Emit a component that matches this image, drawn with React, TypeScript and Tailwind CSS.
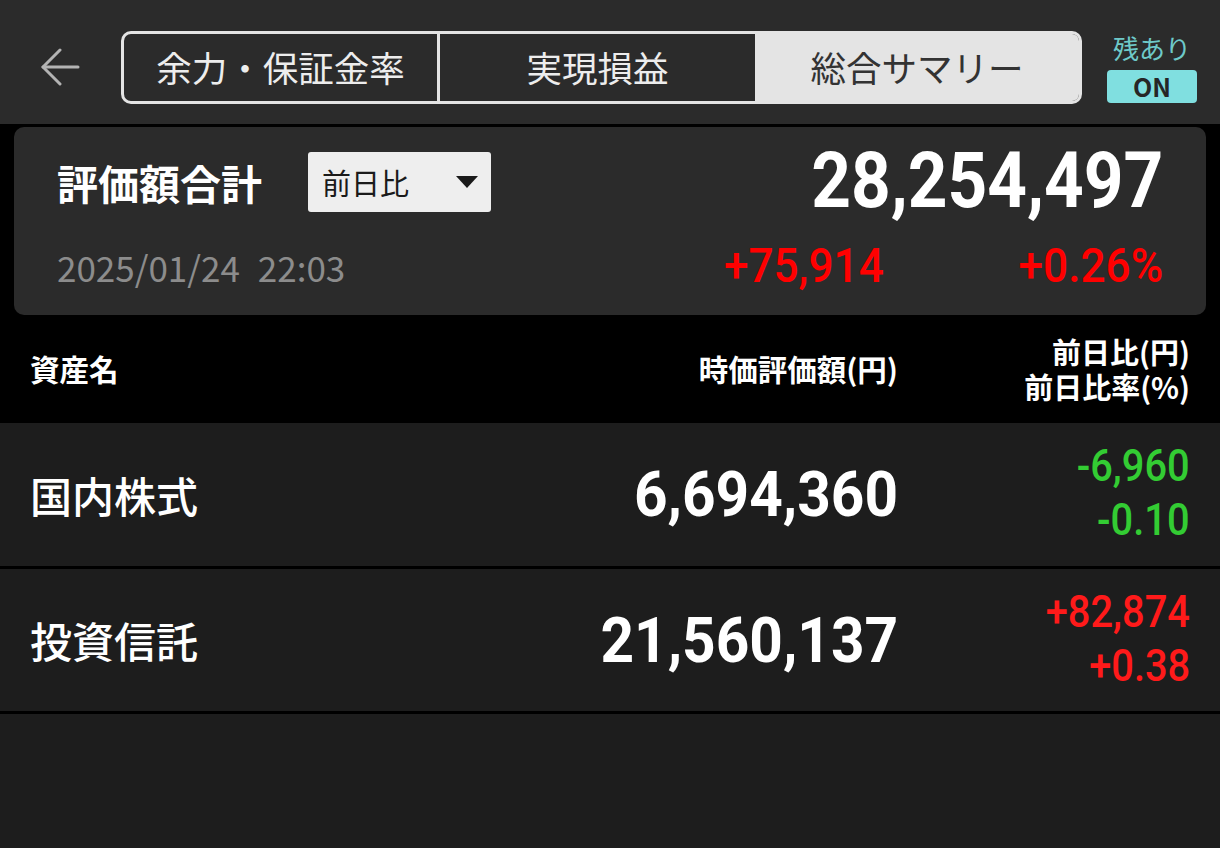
import React from "react";

const NUM = "font-['Roboto',sans-serif]";

function Num({ children, className }: { children: React.ReactNode; className: string }) {
  return <span className={`inline-block origin-right ${NUM} ${className}`}>{children}</span>;
}

export default function App() {
  return (
    <div className="w-[1220px] h-[848px] overflow-hidden bg-[#1d1d1d] font-['Noto_Sans_CJK_JP','Noto_Sans',sans-serif]">
      {/* Header */}
      <div className="h-[124px] bg-[#2b2b2b] flex items-start">
        <div className="ml-[40px] mt-[48px] w-[40px] h-[38px]">
          <svg width="40" height="38" viewBox="0 0 40 38" fill="none" stroke="#b3b3b3" strokeWidth="3" strokeLinecap="round" strokeLinejoin="round">
            <path d="M3 19 H38" />
            <path d="M20 2 L3 19 L20 36" />
          </svg>
        </div>
        <div className="ml-[41px] mt-[31px] w-[961px] h-[73px] border-[3px] border-[#e4e4e4] rounded-[10px] overflow-hidden flex">
          <div className="w-[316px] border-r-[3px] border-[#e4e4e4] flex items-center justify-center text-[35.5px] text-[#ededed] leading-none pb-[2px]">
            余力・保証金率
          </div>
          <div className="w-[315px] flex items-center justify-center text-[35.5px] text-[#ededed] leading-none pb-[2px]">
            実現損益
          </div>
          <div className="flex-1 bg-[#e4e4e4] flex items-center justify-center text-[35.5px] text-[#333333] leading-none pb-[2px]">
            総合サマリー
          </div>
        </div>
        <div className="ml-[25px] mt-[33px] w-[90px] flex flex-col items-center">
          <div className="text-[26px] leading-[30px] text-[#6ec9c9]">残あり</div>
          <div className="mt-[7px] w-[90px] h-[33px] rounded-[4px] bg-[#80dfe0] flex items-center justify-center text-[25px] font-semibold text-[#262626] leading-none">
            ON
          </div>
        </div>
      </div>

      {/* Summary card */}
      <div className="bg-black px-[14px] pt-[3px]">
        <div className="h-[188px] rounded-[10px] bg-[#2b2b2b] pl-[43px] pr-[43px] pt-[25px]">
          <div className="h-[60px] flex items-center justify-between">
            <div className="flex items-center">
              <span className="text-[41px] font-bold text-white leading-none">評価額合計</span>
              <div className="ml-[46px] w-[183px] h-[60px] rounded-[3px] bg-[#eeeeee] flex items-center justify-between pl-[14px] pr-[13px]">
                <span className="text-[29px] text-[#1a1a1a] leading-none">前日比</span>
                <svg width="22" height="12" viewBox="0 0 22 12">
                  <path d="M0 0 H22 L11 12 Z" fill="#1a1a1a" />
                </svg>
              </div>
            </div>
            <Num className="text-[77px] font-bold text-white leading-none scale-x-[0.9] mt-[-2px]">28,254,497</Num>
          </div>
          <div className="mt-[32px] h-[44px] flex items-center justify-between">
            <div className="flex items-center gap-[18px] text-[35px] text-[#8c8c8c] leading-none">
              <span>2025/01/24</span>
              <span>22:03</span>
            </div>
            <div className="flex items-center">
              <Num className="text-[48px] font-medium text-[#ff0000] leading-none scale-x-[0.92]">+75,914</Num>
              <div className="w-[279px] text-right">
                <Num className="text-[48px] font-medium text-[#ff0000] leading-none scale-x-[0.92]">+0.26%</Num>
              </div>
            </div>
          </div>
        </div>

        {/* Table header */}
        <div className="h-[108px] flex items-center -mx-[14px] pl-[30px] pr-[30px]">
          <div className="flex-1 text-[29.5px] font-bold text-white leading-none">資産名</div>
          <div className="text-right text-[29.5px] font-bold text-white leading-none">時価評価額(円)</div>
          <div className="w-[292px] flex flex-col items-end gap-[6px] text-[29px] font-bold text-white leading-none">
            <span className="leading-[29px]">前日比(円)</span>
            <span className="leading-[29px]">前日比率(%)</span>
          </div>
        </div>
      </div>

      {/* Rows */}
      {[
        { name: "国内株式", value: "6,694,360", d1: "-6,960", d2: "-0.10", color: "text-[#33cc33]", h: "h-[146px]" },
        { name: "投資信託", value: "21,560,137", d1: "+82,874", d2: "+0.38", color: "text-[#ff1a1a]", h: "h-[145px]" },
      ].map((r) => (
        <div key={r.name} className={`${r.h} border-b-[3px] border-black flex items-center pl-[30px] pr-[30px]`}>
          <div className="flex-1 text-[42px] font-medium text-white leading-none">{r.name}</div>
          <Num className="text-[63px] font-bold text-white leading-none scale-x-[0.93]">{r.value}</Num>
          <div className="w-[292px] flex flex-col items-end mt-[-3px]">
            <Num className={`text-[45px] font-medium ${r.color} leading-[54px] scale-x-[0.885]`}>{r.d1}</Num>
            <Num className={`text-[45px] font-medium ${r.color} leading-[54px] scale-x-[0.885]`}>{r.d2}</Num>
          </div>
        </div>
      ))}
    </div>
  );
}
